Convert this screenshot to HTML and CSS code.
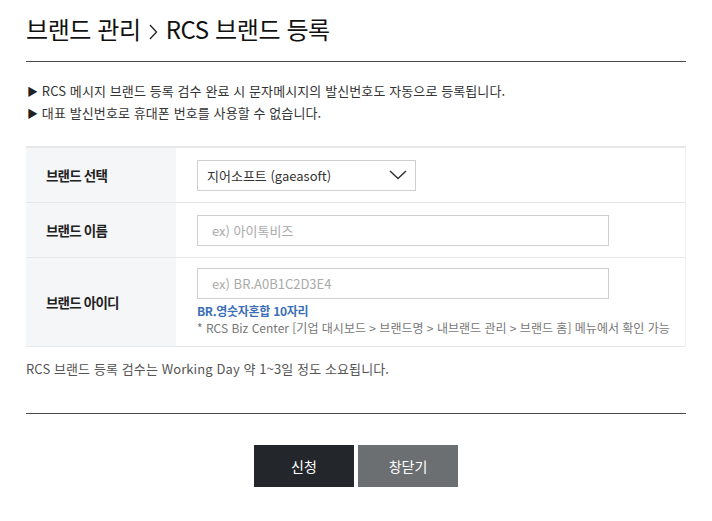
FILE: index.html
```html
<!DOCTYPE html>
<html lang="ko">
<head>
<meta charset="utf-8">
<link rel="stylesheet" href="styles.css">
</head>
<body>
<div class="page">
  <h1 class="title">브랜드 관리<svg class="gt" width="9" height="16" viewBox="0 0 9 16"><path d="M1 1 L7.5 8 L1 15" fill="none" stroke="#222" stroke-width="1.3"/></svg>RCS 브랜드 등록</h1>
  <ul class="notes">
    <li><span class="tri">▶</span> RCS 메시지 브랜드 등록 검수 완료 시 문자메시지의 발신번호도 자동으로 등록됩니다.</li>
    <li><span class="tri">▶</span> 대표 발신번호로 휴대폰 번호를 사용할 수 없습니다.</li>
  </ul>
  <div class="form">
    <div class="row r1">
      <div class="label">브랜드 선택</div>
      <div class="field">
        <div class="select">
          <span>지어소프트 (gaeasoft)</span>
          <svg class="chev" width="18" height="10" viewBox="0 0 18 10"><path d="M1 1 L9 8.5 L17 1" fill="none" stroke="#333" stroke-width="1.5"/></svg>
        </div>
      </div>
    </div>
    <div class="row r2">
      <div class="label">브랜드 이름</div>
      <div class="field">
        <div class="input">ex) 아이톡비즈</div>
      </div>
    </div>
    <div class="row r3">
      <div class="label">브랜드 아이디</div>
      <div class="field col">
        <div class="input">ex) BR.A0B1C2D3E4</div>
        <div class="hint">BR.영숫자혼합 10자리</div>
        <div class="sub">* RCS Biz Center [기업 대시보드 &gt; 브랜드명 &gt; 내브랜드 관리 &gt; 브랜드 홈] 메뉴에서 확인 가능</div>
      </div>
    </div>
  </div>
  <p class="info">RCS 브랜드 등록 검수는 Working Day 약 1~3일 정도 소요됩니다.</p>
  <div class="buttons">
    <button class="btn primary">신청</button>
    <button class="btn secondary">창닫기</button>
  </div>
</div>
</body>
</html>
```
FILE: styles.css
```css
* { box-sizing: border-box; }
html, body { margin: 0; padding: 0; background: #fff; }
body {
  font-family: "Noto Sans CJK KR", "Noto Sans", sans-serif;
  color: #333;
}
.page {
  width: 660px;
  margin-left: 26px;
}
.title {
  margin: 0;
  padding: 13px 0 16px;
  font-size: 24px;
  line-height: 32px;
  font-weight: 400;
  color: #111;
  border-bottom: 1px solid #4a4a4a;
  letter-spacing: -0.4px;
}
.title .gt {
  display: inline-block;
  vertical-align: -1px;
  margin: 0 8px 0 8px;
}
.notes {
  list-style: none;
  margin: 0;
  padding: 18px 0 0 1px;
}
.notes li {
  font-size: 13px;
  line-height: 21px;
  color: #333;
  letter-spacing: 0.1px;
}
.tri {
  font-size: 11px;
  color: #222;
}
.form {
  margin-top: 22px;
  border-top: 2px solid #e6e7e9;
  border-right: 1px solid #eceef0;
}
.row {
  display: flex;
  border-bottom: 1px solid #e6e7e9;
}
.r1 { height: 55px; }
.r2 { height: 55px; }
.r3 { height: 89px; }
.label {
  width: 150px;
  flex: none;
  background: #f5f6f8;
  display: flex;
  align-items: center;
  padding-left: 20px;
  font-size: 13.5px;
  font-weight: 700;
  color: #222;
  letter-spacing: -0.8px;
}
.field {
  flex: 1;
  display: flex;
  align-items: center;
  padding-left: 21px;
}
.field.col {
  flex-direction: column;
  align-items: flex-start;
  justify-content: flex-start;
  padding-top: 10px;
}
.select {
  width: 219px;
  height: 31px;
  border: 1px solid #cfcfcf;
  display: flex;
  align-items: center;
  justify-content: space-between;
  padding: 0 8px 0 9px;
  font-size: 13px;
  color: #333;
}
.chev { display: block; }
.input {
  width: 412px;
  height: 31px;
  border: 1px solid #cfcfcf;
  display: flex;
  align-items: center;
  padding-left: 14px;
  font-size: 13px;
  color: #aaa;
}
.hint {
  margin-top: 3px;
  font-size: 12px;
  line-height: 17px;
  font-weight: 700;
  color: #3b6fb6;
  letter-spacing: -0.3px;
}
.sub {
  font-size: 12px;
  line-height: 17px;
  color: #777;
  white-space: nowrap;
  letter-spacing: 0;
}
.info {
  margin: 13px 0 0;
  font-size: 13px;
  line-height: 18px;
  color: #555;
  padding-bottom: 35px;
  border-bottom: 1px solid #4a4a4a;
  letter-spacing: 0.1px;
}
.buttons {
  display: flex;
  justify-content: center;
  gap: 4px;
  padding-top: 31px;
}
.btn {
  width: 100px;
  height: 42px;
  border: none;
  font-family: inherit;
  font-size: 14px;
  color: #fff;
  padding: 0;
}
.primary { background: #23272c; }
.secondary { background: #6c6f72; }
```
